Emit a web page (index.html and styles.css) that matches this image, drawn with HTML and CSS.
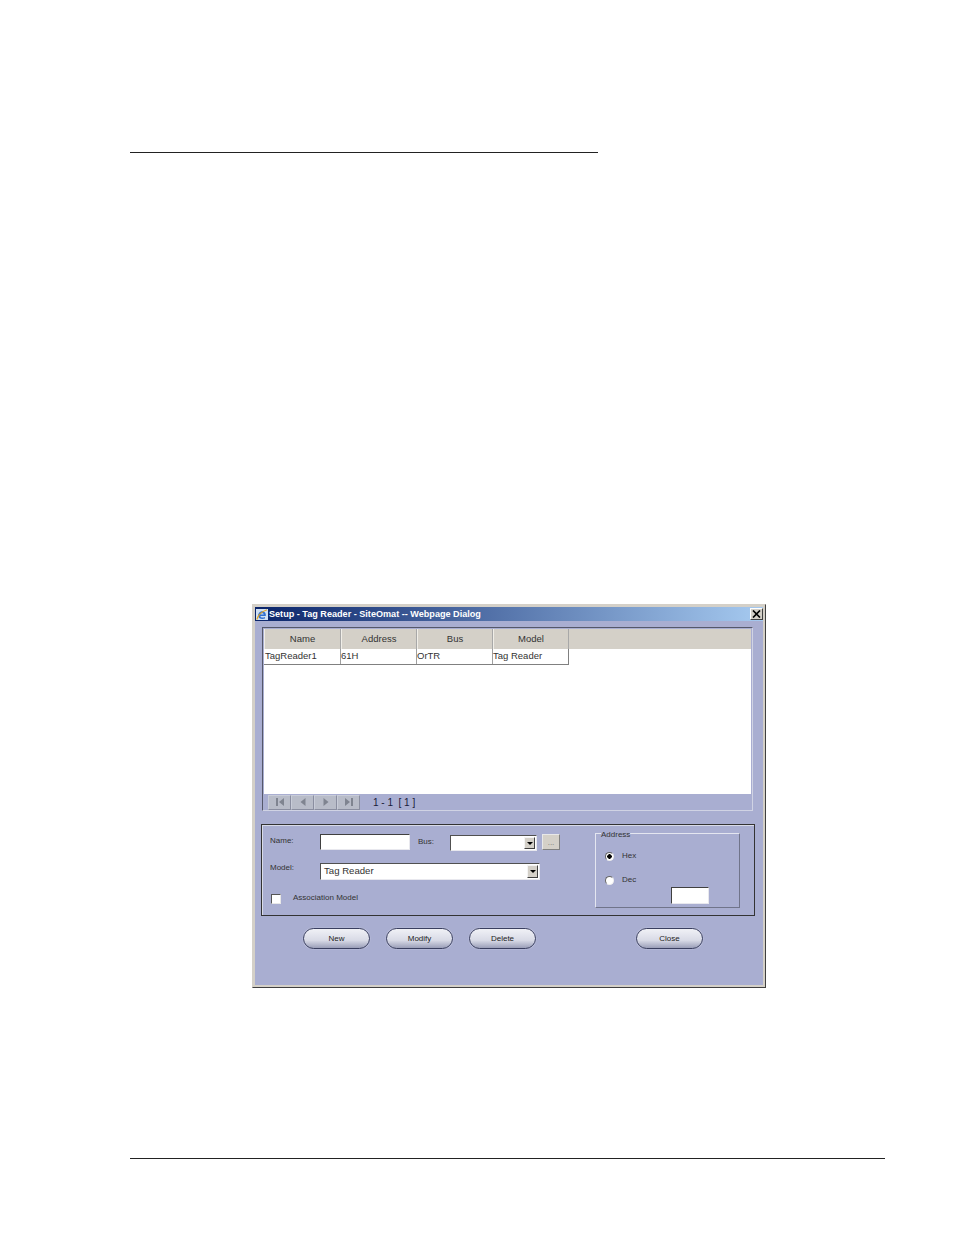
FILE: index.html
```html
<!DOCTYPE html>
<html lang="en">
<head>
    <meta charset="UTF-8">
    <meta name="viewport" content="width=device-width, initial-scale=1.0">
    <title>Setup - Tag Reader</title>
    <link rel="stylesheet" href="styles.css">
</head>
<body>
    <div class="top-rule"></div>

    <div class="dialog">
        <div class="title-bar">
            <svg class="ie-icon" width="12" height="13" viewBox="0 0 12 13">
                <rect x="0" y="1" width="12" height="11" fill="#cfe0f4"/>
                <path d="M9.8 8H4.4C4.6 9.6 6.8 10 9 9V10.6C5.8 11.8 2.4 10.8 2.2 7.8 2 5 4.4 3 7.2 3.4 9.2 3.8 10.1 5.8 9.8 8ZM4.5 6.5H7.8C7.6 4.8 4.9 4.8 4.5 6.5Z" fill="#2f6fd0"/>
                <path d="M0.8 11.5C2 7.5 6 3.4 11 1.8" stroke="#e3a21c" stroke-width="1.1" fill="none"/>
            </svg>
            <span class="title-text">Setup - Tag Reader - SiteOmat -- Webpage Dialog</span>
            <span class="close-x">
                <svg width="9" height="8" viewBox="0 0 9 8"><path d="M1 0.5L8 7.5M8 0.5L1 7.5" stroke="#000" stroke-width="1.7"/></svg>
            </span>
        </div>

        <div class="client">
            <div class="grid-panel">
                <div class="grid-head">
                    <div class="head-cell">Name</div>
                    <div class="head-cell">Address</div>
                    <div class="head-cell">Bus</div>
                    <div class="head-cell">Model</div>
                </div>
                <div class="grid-body">
                    <div class="grid-row">
                        <div class="data-cell">TagReader1</div>
                        <div class="data-cell">61H</div>
                        <div class="data-cell">OrTR</div>
                        <div class="data-cell">Tag Reader</div>
                    </div>
                </div>
                <div class="pager">
                    <div class="pager-buttons">
                        <span class="pager-btn"><svg width="10" height="10" viewBox="0 0 10 10"><path d="M1 1H3V9H1ZM9 1V9L4 5Z" fill="#7f8490"/></svg></span>
                        <span class="pager-btn"><svg width="10" height="10" viewBox="0 0 10 10"><path d="M7.5 1V9L2.5 5Z" fill="#7f8490"/></svg></span>
                        <span class="pager-btn"><svg width="10" height="10" viewBox="0 0 10 10"><path d="M2.5 1V9L7.5 5Z" fill="#7f8490"/></svg></span>
                        <span class="pager-btn"><svg width="10" height="10" viewBox="0 0 10 10"><path d="M1 1V9L6 5ZM7 1H9V9H7Z" fill="#7f8490"/></svg></span>
                    </div>
                    <span class="pager-text">1 - 1&nbsp; [ 1 ]</span>
                </div>
            </div>

            <div class="form-panel">
                <div class="form-left">
                    <div class="form-row name-row">
                        <span class="label label-first">Name:</span>
                        <span class="text-box name-box"></span>
                        <span class="label bus-label">Bus:</span>
                        <span class="select bus-select"><span class="select-value"></span><span class="select-arrow"></span></span>
                        <span class="dots-btn">...</span>
                    </div>
                    <div class="form-row model-row">
                        <span class="label label-first">Model:</span>
                        <span class="select model-select"><span class="select-value">Tag Reader</span><span class="select-arrow"></span></span>
                    </div>
                    <div class="form-row assoc-row">
                        <span class="checkbox"></span>
                        <span class="label">Association Model</span>
                    </div>
                </div>
                <fieldset class="address-group">
                    <legend>Address</legend>
                    <div class="radio-row hex-row"><span class="radio radio-on"></span><span class="label">Hex</span></div>
                    <div class="radio-row dec-row"><span class="radio"></span><span class="label">Dec</span></div>
                    <span class="text-box address-box"></span>
                </fieldset>
            </div>

            <div class="actions">
                <span class="pill">New</span>
                <span class="pill">Modify</span>
                <span class="pill">Delete</span>
                <span class="pill pill-close">Close</span>
            </div>
        </div>
    </div>

    <div class="bottom-rule"></div>
</body>
</html>
```

FILE: styles.css
```css
body, html {
    font-family: "Liberation Sans", Arial, sans-serif;
    margin: 0;
    padding: 0;
    background-color: white;
}
body {
    height: 1234px;
    overflow: hidden;
    padding-top: 152px;
    box-sizing: border-box;
}
.top-rule {
    width: 468px;
    height: 1px;
    margin-left: 130px;
    background-color: #222;
}
.bottom-rule {
    width: 755px;
    height: 1px;
    margin-left: 130px;
    margin-top: 170px;
    background-color: #222;
}
.dialog {
    width: 514px;
    height: 384px;
    box-sizing: border-box;
    margin: 451px 0 0 252px;
    padding: 2px;
    background-color: #d4d0c8;
    border-top: 1px solid #d4d0c8;
    border-left: 1px solid #d4d0c8;
    border-right: 1px solid #404040;
    border-bottom: 1px solid #404040;
    display: flex;
    flex-direction: column;
}
.title-bar {
    height: 14px;
    flex: none;
    display: flex;
    align-items: center;
    padding: 0 0 0 1px;
    background: linear-gradient(to right, #0a246a, #a6caf0);
    color: white;
    font-size: 9.1px;
    font-weight: bold;
}
.ie-icon {
    margin-right: 1px;
}
.title-text {
    flex: 1;
    white-space: nowrap;
}
.close-x {
    width: 13px;
    height: 12px;
    display: flex;
    align-items: center;
    justify-content: center;
    background-color: #d4d0c8;
    border: 1px solid;
    border-color: #fff #404040 #404040 #fff;
    box-sizing: border-box;
}
.client {
    flex: 1;
    background-color: #a9aed1;
    padding: 6px 0 0 7px;
    color: #111;
}

/* table block */
.grid-panel {
    width: 491px;
    height: 184px;
    box-sizing: border-box;
    border: 1px solid;
    border-color: #55586a #d0d3e4 #d0d3e4 #55586a;
    padding: 1px 1px 0 1px;
    display: flex;
    flex-direction: column;
    margin-left: 0;
}
.grid-head {
    display: flex;
    height: 20px;
    flex: none;
    background-color: #d4d0c8;
}
.head-cell {
    width: 76px;
    border-right: 1px solid #a8a8a8;
    border-left: 1px solid #f0eee8;
    box-sizing: border-box;
    text-align: center;
    font-size: 9.5px;
    line-height: 19px;
    color: #333;
}
.head-cell:first-child {
    width: 77px;
}
.grid-body {
    flex: 1;
    background-color: white;
}
.grid-row {
    display: flex;
    height: 16px;
    width: 305px;
    box-sizing: border-box;
    border-bottom: 1px solid #808080;
    border-right: 1px solid #808080;
}
.data-cell {
    width: 76px;
    box-sizing: border-box;
    border-right: 1px solid #a0a0a0;
    font-size: 9.5px;
    line-height: 14px;
    color: #333;
}
.data-cell:first-child {
    width: 77px;
    padding-left: 1px;
}
.data-cell:last-child {
    width: 75px;
    border-right: none;
}
.pager {
    height: 16px;
    flex: none;
    display: flex;
    align-items: center;
    padding-left: 4px;
}
.pager-buttons {
    display: flex;
    gap: 0;
}
.pager-btn {
    width: 23px;
    height: 15px;
    box-sizing: border-box;
    display: flex;
    align-items: center;
    justify-content: center;
    background-color: #b8bcc8;
    border: 1px solid;
    border-color: #c8ccd8 #8a8ea0 #8a8ea0 #c8ccd8;
}
.pager-text {
    margin-left: 13px;
    font-size: 10px;
    color: #1a1a3a;
}

/* form block */
.form-panel {
    width: 494px;
    height: 92px;
    box-sizing: border-box;
    margin: 13px 0 0 -1px;
    border: 1px solid #333;
    box-shadow: inset 1px 1px 0 #d8dbe8;
    display: flex;
}
.form-left {
    width: 333px;
    flex: none;
    padding: 10px 0 0 8px;
    box-sizing: border-box;
}
.form-row {
    display: flex;
    align-items: flex-start;
}
.label {
    font-size: 8px;
    line-height: 11px;
    color: #333;
    white-space: nowrap;
}
.label-first {
    width: 50px;
    flex: none;
}
.text-box {
    display: block;
    background-color: white;
    box-sizing: border-box;
    border: 1px solid;
    border-color: #404040 #e8e8ee #e8e8ee #404040;
}
.name-box {
    width: 90px;
    height: 16px;
    margin-top: -1px;
}
.bus-label {
    margin: 1px 0 0 8px;
    width: 32px;
}
.select {
    display: flex;
    background-color: white;
    box-sizing: border-box;
    border: 1px solid;
    border-color: #505050 #e8e8ee #e8e8ee #505050;
    padding: 1px;
}
.select-value {
    flex: 1;
    font-size: 9.6px;
    line-height: 12px;
    padding-left: 2px;
    color: #333;
}
.select-arrow {
    width: 11px;
    flex: none;
    background-color: #d4d0c8;
    border: 1px solid;
    border-color: #f4f4f4 #404040 #404040 #f4f4f4;
    box-sizing: border-box;
    position: relative;
}
.select-arrow::after {
    content: "";
    position: absolute;
    left: 2px;
    top: 4px;
    border-left: 3px solid transparent;
    border-right: 3px solid transparent;
    border-top: 3px solid #000;
}
.bus-select {
    width: 87px;
    height: 16px;
}
.dots-btn {
    width: 18px;
    height: 16px;
    margin: -1px 0 0 5px;
    box-sizing: border-box;
    background-color: #d4d0c8;
    border: 1px solid;
    border-color: #e8e8e8 #808080 #808080 #e8e8e8;
    font-size: 8px;
    line-height: 15px;
    text-align: center;
    color: #777;
}
.model-row {
    margin-top: 12px;
}
.model-row .label-first {
    margin-top: -1px;
}
.model-select {
    width: 220px;
    height: 17px;
}
.assoc-row {
    margin-top: 14px;
}
.assoc-row .label {
    margin-top: -2px;
}
.checkbox {
    width: 10px;
    height: 10px;
    box-sizing: border-box;
    margin: 0 12px 0 1px;
    background-color: white;
    border: 1px solid;
    border-color: #555 #e8e8e8 #e8e8e8 #555;
}
.address-group {
    width: 145px;
    height: 82px;
    box-sizing: border-box;
    margin: 1px 0 0 0;
    padding: 0;
    border: 1px solid;
    border-color: #e4e6f0 #70748a #70748a #e4e6f0;
}
.address-group legend {
    font-size: 8px;
    line-height: 10px;
    padding: 4px 0 0 0;
    margin-left: 5px;
    color: #333;
}
.radio-row {
    display: flex;
    align-items: center;
    margin-left: 9px;
}
.hex-row {
    margin-top: 10px;
}
.dec-row {
    margin-top: 13px;
}
.radio {
    width: 9px;
    height: 9px;
    box-sizing: border-box;
    margin: 2px 8px 0 0;
    border-radius: 50%;
    background-color: white;
    border: 1px solid #666;
    border-bottom-color: #eee;
    border-right-color: #eee;
}
.radio-on {
    background: radial-gradient(circle, #000 0 2px, #fff 2.5px);
}
.address-box {
    width: 38px;
    height: 17px;
    margin: 2px 0 0 75px;
}

/* buttons */
.actions {
    display: flex;
    margin: 12px 0 0 41px;
}
.pill {
    width: 67px;
    height: 21px;
    box-sizing: border-box;
    margin-right: 16px;
    border-radius: 11px;
    border: 1px solid #3a3f60;
    background: linear-gradient(to bottom, #f0f1f6, #d8dae6 60%, #9a9eb8);
    box-shadow: 0 0 1px #fff;
    font-size: 8px;
    line-height: 19px;
    text-align: center;
    color: #222;
}
.pill-close {
    margin-left: 84px;
}
```
